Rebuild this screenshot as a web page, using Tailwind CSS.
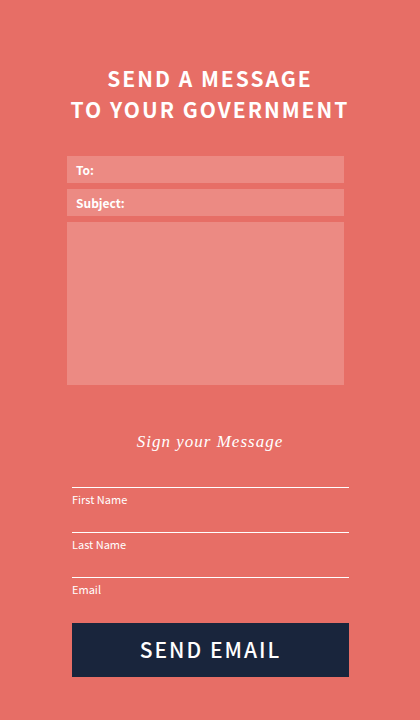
<!DOCTYPE html>
<html lang="en">
<head>
<meta charset="utf-8">
<meta name="viewport" content="width=device-width, initial-scale=1">
<title>Send a message to your government</title>
<script src="https://cdn.jsdelivr.net/npm/@tailwindcss/browser@4"></script>
</head>
<body class="min-h-screen bg-[#e76e66] font-['Noto_Sans_CJK_SC','Open_Sans',sans-serif] text-white">
<main class="pt-[63px] pb-10">
  <h1 class="text-center text-[21px] leading-[31px] font-bold tracking-[2px] uppercase">Send a message<br>to your government</h1>
  <form>
    <div class="mt-[31px] mr-19 ml-[67px] flex flex-col gap-1.5">
      <div class="flex h-[27px] items-center bg-[#ec8a83] px-[9px] pt-px text-[12px] leading-5 font-bold">
        <label for="to">To:</label>
        <input id="to" type="text" class="ml-2 min-w-0 flex-1 outline-none">
      </div>
      <div class="flex h-[27px] items-center bg-[#ec8a83] px-[9px] pt-px text-[12px] leading-5 font-bold">
        <label for="subject">Subject:</label>
        <input id="subject" type="text" class="ml-2 min-w-0 flex-1 outline-none">
      </div>
      <textarea aria-label="Message" class="block h-[163px] w-full resize-none bg-[#ec8a83] px-[9px] py-2 text-[12px] outline-none"></textarea>
    </div>
    <h2 class="mt-[43px] text-center font-['Liberation_Serif',serif] text-[17px] leading-7 tracking-[1px] italic">Sign your Message</h2>
    <div class="mr-[71px] ml-18">
      <div class="mt-2 flex flex-col text-[11px] leading-5">
        <input id="first" type="text" class="h-6 w-full border-b border-white outline-none">
        <label for="first" class="pt-px">First Name</label>
        <input id="last" type="text" class="h-6 w-full border-b border-white outline-none">
        <label for="last" class="pt-px">Last Name</label>
        <input id="email" type="email" class="h-6 w-full border-b border-white outline-none">
        <label for="email" class="pt-px">Email</label>
      </div>
      <button type="submit" class="mt-6 block h-[54px] w-full bg-[#19253c] pb-0.5 text-[21px] leading-[52px] font-medium tracking-[2px] uppercase">Send email</button>
    </div>
  </form>
</main>
</body>
</html>
